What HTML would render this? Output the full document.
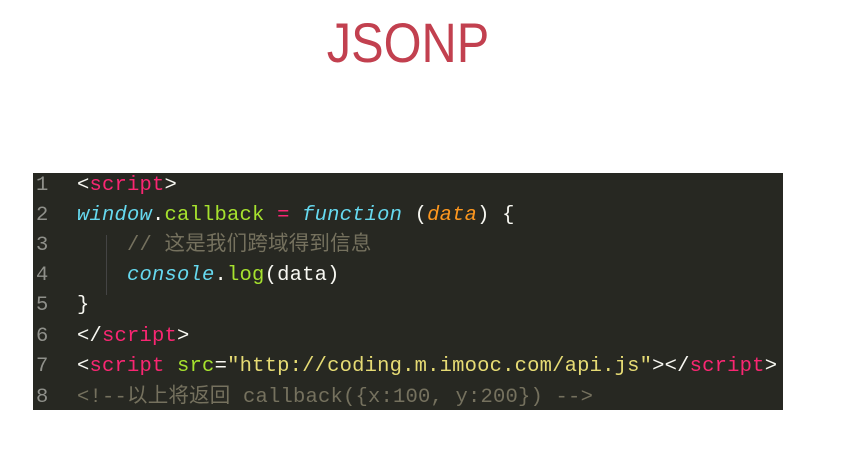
<!DOCTYPE html>
<html><head><meta charset="utf-8"><style>
body{margin:0;width:852px;height:455px;background:#fff;position:relative;overflow:hidden}
.t{position:absolute;left:0;width:816px;text-align:center;top:10px;font:56px "Liberation Sans",sans-serif;color:#c2404f;transform:scaleX(0.87);transform-origin:408px 0}
.code{position:absolute;left:33px;top:173px;width:750px;height:237px;background:#272822}
.l{position:absolute;left:0;height:30px;font:20.5px/30px "Liberation Mono","Noto Sans CJK SC",monospace;white-space:pre;color:#f8f8f2;letter-spacing:0.2px}
.n{position:absolute;left:3px;color:#8f908a}
.c{position:absolute;left:44px}
.r{color:#f92672}.b{color:#66d9ef;font-style:italic}.g{color:#a6e22e}.o{color:#fd971f;font-style:italic}.y{color:#e6db74}.m{color:#75715e}
.guide{position:absolute;left:73px;top:62px;width:1px;height:60px;background:#444}
</style></head><body>
<div class="t">JSONP</div>
<div class="code">
<div class="guide"></div>
<div class="l" style="top:-2px"><span class="n">1</span><span class="c">&lt;<span class="r">script</span>&gt;</span></div>
<div class="l" style="top:28px"><span class="n">2</span><span class="c"><span class="b">window</span>.<span class="g">callback</span> <span class="r">=</span> <span class="b">function</span> (<span class="o">data</span>) {</span></div>
<div class="l" style="top:58px"><span class="n">3</span><span class="c m">    // 这是我们跨域得到信息</span></div>
<div class="l" style="top:88px"><span class="n">4</span><span class="c">    <span class="b">console</span>.<span class="g">log</span>(data)</span></div>
<div class="l" style="top:118px"><span class="n">5</span><span class="c">}</span></div>
<div class="l" style="top:149px"><span class="n">6</span><span class="c">&lt;/<span class="r">script</span>&gt;</span></div>
<div class="l" style="top:179px"><span class="n">7</span><span class="c">&lt;<span class="r">script</span> <span class="g">src</span>=<span class="y">"http://coding.m.imooc.com/api.js"</span>&gt;&lt;/<span class="r">script</span>&gt;</span></div>
<div class="l" style="top:210px"><span class="n">8</span><span class="c m">&lt;!--以上将返回 callback({x:100, y:200}) --&gt;</span></div>
</div>
</body></html>
